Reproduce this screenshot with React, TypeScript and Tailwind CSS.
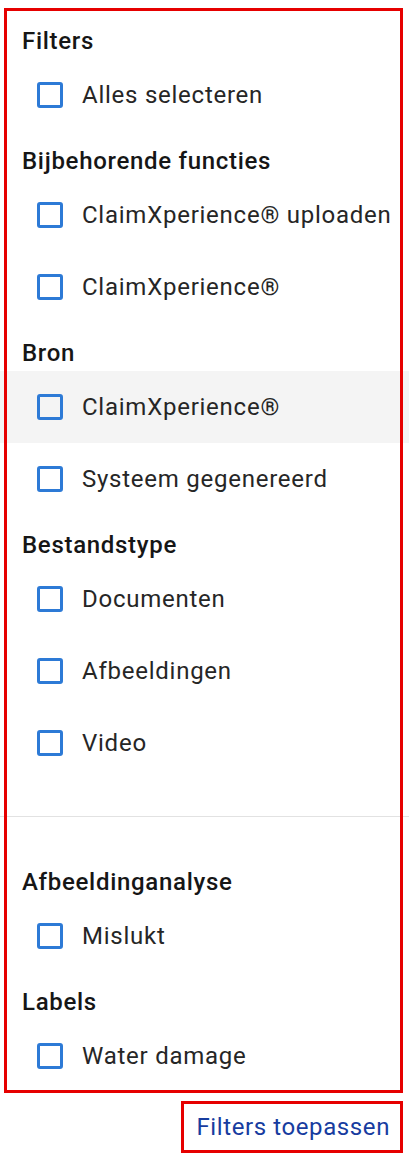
import React from 'react'

type Group = { title: string; items: string[] }

const GROUPS_TOP: Group[] = [
  { title: 'Filters', items: ['Alles selecteren'] },
  { title: 'Bijbehorende functies', items: ['ClaimXperience® uploaden', 'ClaimXperience®'] },
  { title: 'Bron', items: ['ClaimXperience®', 'Systeem gegenereerd'] },
  { title: 'Bestandstype', items: ['Documenten', 'Afbeeldingen', 'Video'] },
]

const GROUPS_BOTTOM: Group[] = [
  { title: 'Afbeeldinganalyse', items: ['Mislukt'] },
  { title: 'Labels', items: ['Water damage'] },
]

function Heading({ children }: { children: React.ReactNode }) {
  return (
    <div className="h-[48px] pt-[14px] pl-[22px] text-[24px] leading-[32px] font-medium tracking-[0.7px] text-[#161616]">
      {children}
    </div>
  )
}

function CheckRow({ label, hover }: { label: string; hover?: boolean }) {
  return (
    <label className={`flex h-[72px] items-center pl-[37px] cursor-pointer ${hover ? 'bg-[#f4f4f4]' : ''}`}>
      <span className="h-[26px] w-[26px] shrink-0 rounded-[3px] border-[3px] border-[#2d7ad6]" />
      <span className="ml-[19px] text-[24px] leading-[32px] tracking-[0.75px] text-[#262626]">{label}</span>
    </label>
  )
}

function GroupBlock({ group, hoverIndex }: { group: Group; hoverIndex?: number }) {
  return (
    <div>
      <Heading>{group.title}</Heading>
      {group.items.map((item, i) => (
        <CheckRow key={item + i} label={item} hover={hoverIndex === i} />
      ))}
    </div>
  )
}

export default function App() {
  return (
    <div className="w-[409px] min-h-[1161px] bg-white" style={{ fontFamily: 'Roboto, "Noto Sans", sans-serif' }}>
      <div className="relative pt-[11px]">
        {GROUPS_TOP.map((g) => (
          <GroupBlock key={g.title} group={g} hoverIndex={g.title === 'Bron' ? 0 : undefined} />
        ))}
        <div className="mt-[37px] mb-[35px] h-px bg-[#e2e2e2]" />
        {GROUPS_BOTTOM.map((g) => (
          <GroupBlock key={g.title} group={g} />
        ))}
        <div className="pointer-events-none absolute left-[4px] top-[8px] h-[1085px] w-[399px] border-[3px] border-[#e60000]" />
      </div>
      <div className="mt-[9px] flex justify-end pr-[6px]">
        <button className="h-[52px] border-[3px] border-[#e60000] pl-[12px] pr-[10px] text-[24px] leading-[32px] tracking-[0.6px] text-[#173c9f]">
          Filters toepassen
        </button>
      </div>
    </div>
  )
}
